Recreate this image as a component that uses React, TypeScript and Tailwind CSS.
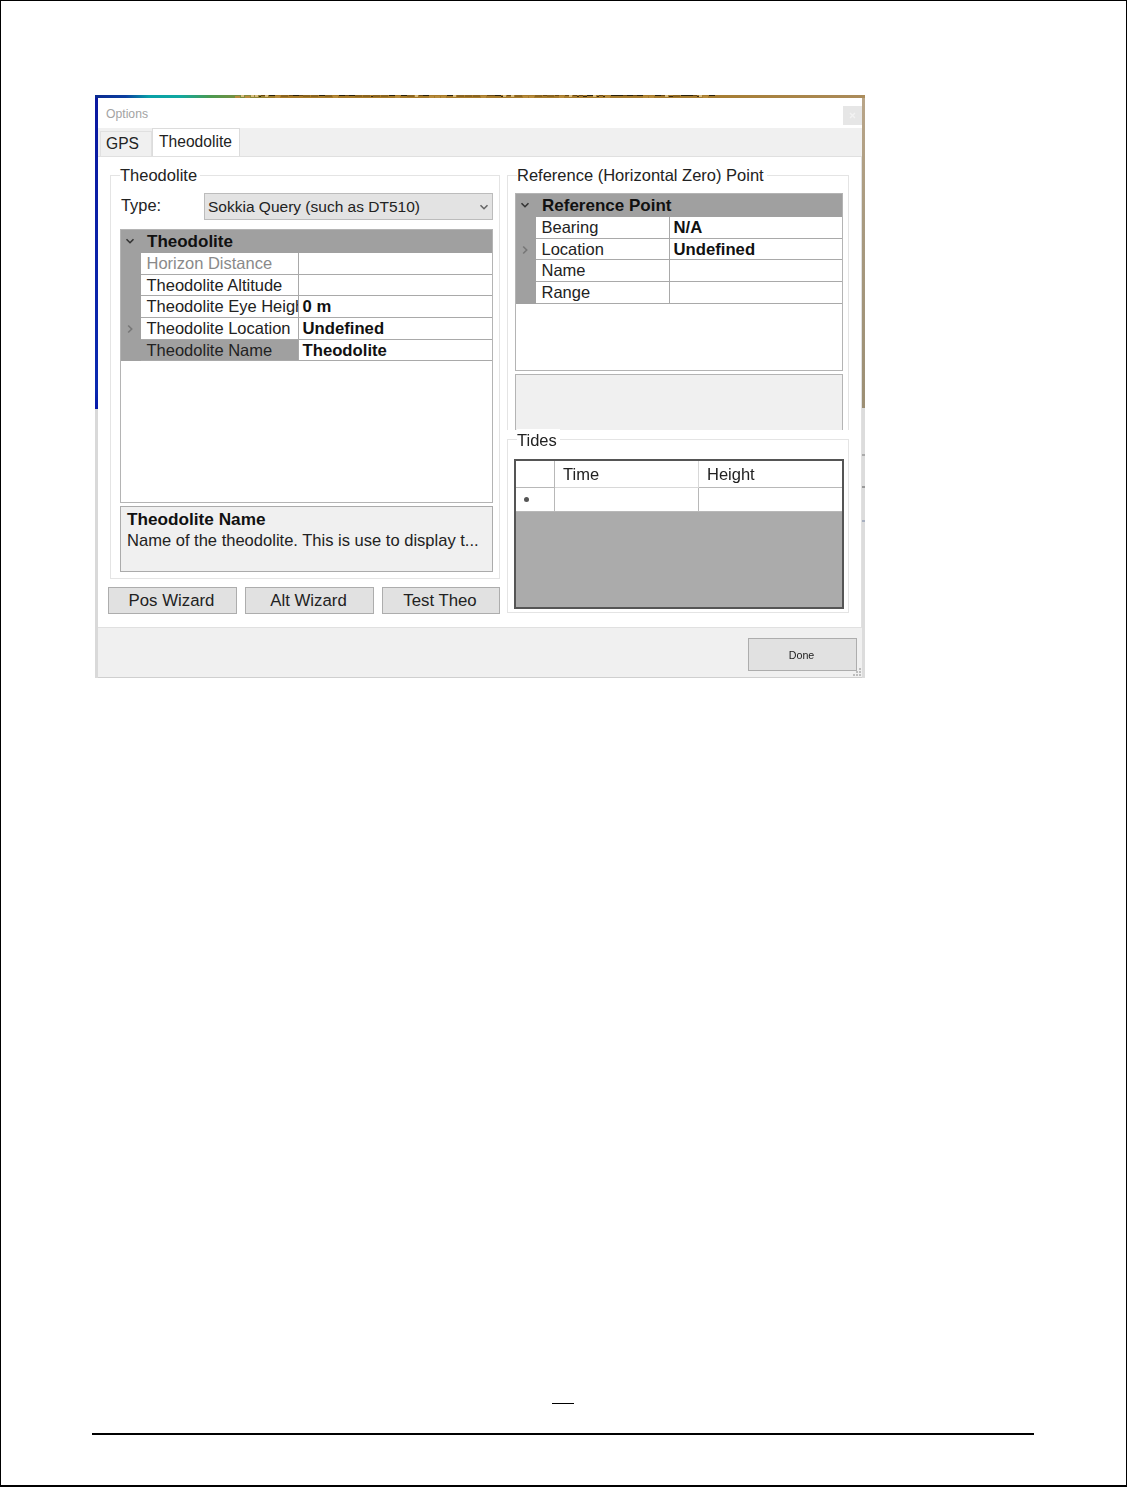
import React from "react";

function Speckle() {
  const cols = ["#3a2a10", "#d8bc80", "#6a4812", "#b88c3c", "#2a2008", "#8a6420"];
  const rects = [];
  let s = 17;
  for (let x = 140; x < 615; ) {
    s = (s * 73 + 41) % 1009;
    const w = 2 + (s % 6);
    rects.push(<rect key={x} x={x} y={s % 3 === 0 ? 1 : 0} width={w} height={1 + (s % 2)} fill={cols[s % 6]} />);
    x += w + (s % 2);
  }
  return (
    <svg width="770" height="3" viewBox="0 0 770 3" className="block">
      <defs>
        <linearGradient id="wall" x1="0" x2="1" y1="0" y2="0">
          <stop offset="0" stopColor="#0a2a90" />
          <stop offset="0.04" stopColor="#0a3fa0" />
          <stop offset="0.07" stopColor="#08a0a8" />
          <stop offset="0.11" stopColor="#10a8a0" />
          <stop offset="0.15" stopColor="#4a9a50" />
          <stop offset="0.2" stopColor="#8a8a3a" />
          <stop offset="0.24" stopColor="#a87a28" />
          <stop offset="0.8" stopColor="#a67c30" />
          <stop offset="1" stopColor="#ab8c5c" />
        </linearGradient>
      </defs>
      <rect width="770" height="3" fill="url(#wall)" />
      {rects}
    </svg>
  );
}

function Chevron({ dir, color }: { dir: "down" | "right"; color: string }) {
  return (
    <svg width="10" height="10" viewBox="0 0 10 10" fill="none" stroke={color} strokeWidth="1.6">
      {dir === "down" ? <path d="M1.5 3.2 L5 6.7 L8.5 3.2" /> : <path d="M3.2 1.5 L6.7 5 L3.2 8.5" />}
    </svg>
  );
}

type Row = { name: string; value?: string; muted?: boolean; arrow?: boolean; selected?: boolean };

function Grid({ title, rows, nameW, className }: { title: string; rows: Row[]; nameW: string; className: string }) {
  return (
    <div className={`flex flex-col border border-[#b4b4b4] bg-white ${className}`}>
      <div className="flex h-[23px] shrink-0 items-center bg-[#a0a0a0] text-[17px] font-bold text-[#111]">
        <div className="flex w-[20px] justify-center pb-[2px] pr-[2px]">
          <Chevron dir="down" color="#333" />
        </div>
        <span className="ml-[6px] pt-[1px] leading-[24px]">{title}</span>
      </div>
      {rows.map((r) => (
        <div key={r.name} className="flex h-[21.7px] shrink-0 bg-[#a0a0a0]">
          <div className="flex w-[20px] shrink-0 items-center justify-center pr-[2px]">
            {r.arrow && <Chevron dir="right" color="#777" />}
          </div>
          <div
            className={`${nameW} shrink-0 overflow-hidden whitespace-nowrap border-b border-r border-[#a9a9a9] pl-[5.5px] text-[16.5px] leading-[21.5px] ${
              r.selected ? "bg-[#a0a0a0] text-[#222]" : "bg-white"
            } ${r.muted ? "text-[#8a8a8a]" : "text-[#222]"}`}
          >
            {r.name}
          </div>
          <div className="flex-1 whitespace-nowrap border-b border-[#a9a9a9] bg-white pl-[3.5px] text-[16.7px] font-bold leading-[21.5px] text-[#111]">
            {r.value}
          </div>
        </div>
      ))}
    </div>
  );
}

function Btn({ label, className }: { label: string; className: string }) {
  return (
    <div className={`flex items-center justify-center border border-[#adadad] bg-[#e1e1e1] pr-[2px] text-[16.8px] text-[#222] ${className}`}>
      {label}
    </div>
  );
}

function Legend({ children, className }: { children: React.ReactNode; className: string }) {
  return <div className={`-mt-[11px] h-[21px] w-fit bg-white pr-[3px] text-[16.5px] leading-[21px] text-[#222] ${className}`}>{children}</div>;
}

export default function App() {
  return (
    <div className="box-border h-[1487px] w-[1127px] overflow-hidden border-b-[2px] border-l border-r border-t border-black bg-white font-['Liberation_Sans',Arial,sans-serif] text-[16.4px]">
      <div className="ml-[94px] mt-[94px] flex h-[583px] w-[770px] flex-col blur-[0.35px]">
        <div className="h-[3px] shrink-0 overflow-hidden">
          <Speckle />
        </div>
        <div className="flex min-h-0 flex-1">
          <div className="w-[3px] shrink-0 bg-[linear-gradient(180deg,#0a18a0_0%,#0a2ab0_50%,#0618a8_53.6%,#d9d9d9_53.7%,#d9d9d9_100%)]" />
          <div className="relative flex min-w-0 flex-1 flex-col">
            <div className="flex h-[30px] shrink-0 items-start justify-between bg-white">
              <span className="ml-[8px] mt-[8.5px] text-[12.2px] leading-[15px] text-[#a3a3a3]">Options</span>
              <div className="mt-[8px] flex h-[19px] w-[19px] items-center justify-center bg-[#e6e6e6]">
                <svg width="7" height="7" viewBox="0 0 7 7" stroke="#f2f2f2" strokeWidth="1.4">
                  <path d="M1 1 L6 6 M6 1 L1 6" />
                </svg>
              </div>
            </div>
            <div className="flex h-[28px] shrink-0 items-end bg-[#f0f0f0] pl-[2px] text-[15.6px] text-[#222]">
              <div className="flex h-[25px] w-[52px] items-center border border-b-0 border-[#e0e0e0] bg-[#f0f0f0] pl-[5px] text-[#222]">
                GPS
              </div>
              <div className="flex h-[28px] w-[88px] items-center justify-center border border-b-0 border-[#dcdcdc] bg-white pb-[2px] pr-[1px]">
                Theodolite
              </div>
            </div>
            <div className="flex h-[472px] shrink-0 gap-[7px] border-b border-r border-t border-[#e0e0e0] bg-white pl-[10px] pt-[18px]">
              <div className="flex w-[392px] flex-col">
                <div className="ml-[2px] flex h-[404px] w-[390px] flex-col border border-[#e4e4e4] pl-[9px] pr-[6px]">
                  <Legend className="ml-0">Theodolite</Legend>
                  <div className="mt-[7px] flex h-[27px] shrink-0 items-center">
                    <span className="ml-[1px] w-[83px] pb-[2px] text-[#222]">Type:</span>
                    <div className="flex h-[27px] flex-1 items-center justify-between border border-[#bcbcbc] bg-[#e3e3e3] pl-[3px] pr-[3px] text-[15.5px] text-[#222]">
                      <span>Sokkia Query (such as DT510)</span>
                      <Chevron dir="down" color="#666" />
                    </div>
                  </div>
                  <Grid
                    className="mt-[9px] h-[274px] shrink-0"
                    nameW="w-[158px]"
                    title="Theodolite"
                    rows={[
                      { name: "Horizon Distance", muted: true },
                      { name: "Theodolite Altitude" },
                      { name: "Theodolite Eye Height", value: "0 m" },
                      { name: "Theodolite Location", value: "Undefined", arrow: true },
                      { name: "Theodolite Name", value: "Theodolite", selected: true },
                    ]}
                  />
                  <div className="mt-[3px] h-[66px] shrink-0 border border-[#ababab] bg-[#f0f0f0] pl-[6px] pt-[2px] text-[16.55px] leading-[21px] text-[#222]">
                    <div className="text-[17.2px] font-bold text-[#111]">Theodolite Name</div>
                    <div className="whitespace-nowrap">Name of the theodolite. This is use to display t...</div>
                  </div>
                </div>
                <div className="mt-[8px] flex gap-[8px]">
                  <Btn label="Pos Wizard" className="h-[27px] w-[129px]" />
                  <Btn label="Alt Wizard" className="h-[27px] w-[129px]" />
                  <Btn label="Test Theo" className="h-[27px] w-[118px]" />
                </div>
              </div>
              <div className="flex w-[342px] flex-col">
                <div className="flex h-[255px] shrink-0 flex-col border-l border-r border-t border-[#e4e4e4] pl-[7px] pr-[5px]">
                  <Legend className="ml-[2px]">Reference (Horizontal Zero) Point</Legend>
                  <Grid
                    className="mt-[7px] h-[178px] shrink-0"
                    nameW="w-[134px]"
                    title="Reference Point"
                    rows={[
                      { name: "Bearing", value: "N/A" },
                      { name: "Location", value: "Undefined", arrow: true },
                      { name: "Name" },
                      { name: "Range" },
                    ]}
                  />
                  <div className="mt-[3px] h-[56px] shrink-0 border-l border-r border-t border-[#b4b4b4] bg-[#f0f0f0]" />
                </div>
                <div className="mt-[9px] flex h-[174px] shrink-0 flex-col border border-[#e4e4e4] pl-[6px] pr-[4px]">
                  <Legend className="ml-[3px] pt-[1px]">Tides</Legend>
                  <div className="mt-[9px] flex h-[150px] shrink-0 flex-col border-2 border-[#555] bg-[#ababab] text-[16.5px] text-[#222]">
                    <div className="flex h-[27px] shrink-0 bg-white">
                      <div className="w-[39px] border-b border-r border-[#b8b8b8]" />
                      <div className="w-[144px] border-b border-r border-[#d8d8d8] pl-[8px] leading-[27px]">Time</div>
                      <div className="flex-1 border-b border-[#b8b8b8] pl-[8px] leading-[27px]">Height</div>
                    </div>
                    <div className="flex h-[24px] shrink-0 bg-white">
                      <div className="flex w-[39px] items-center border-b border-r border-[#b8b8b8] pl-[8px]">
                        <span className="h-[5px] w-[5px] rounded-full bg-[#555]" />
                      </div>
                      <div className="w-[144px] border-b border-r border-[#b8b8b8]" />
                      <div className="flex-1 border-b border-[#b8b8b8]" />
                    </div>
                  </div>
                </div>
              </div>
            </div>
            <div className="flex flex-1 items-start justify-end border-b border-[#cfcfcf] bg-[#f0f0f0] pr-[5px] pt-[10px]">
              <div className="flex h-[33px] w-[109px] items-center justify-center border border-[#adadad] bg-[#e1e1e1] pr-[2px] pt-[1px] text-[10.7px] text-[#222]">
                Done
              </div>
            </div>
            <svg width="9" height="9" viewBox="0 0 9 9" fill="#bdbdbd" className="absolute bottom-[1px] right-0">
              <rect x="6" y="0" width="2" height="2" />
              <rect x="3" y="3" width="2" height="2" />
              <rect x="6" y="3" width="2" height="2" />
              <rect x="0" y="6" width="2" height="2" />
              <rect x="3" y="6" width="2" height="2" />
              <rect x="6" y="6" width="2" height="2" />
            </svg>
          </div>
          <div className="flex w-[3px] shrink-0 flex-col bg-[#dcdcdc]">
            <div className="h-[310px] shrink-0 bg-[linear-gradient(180deg,#b9a588_0%,#a89a80_40%,#9c8f74_100%)]" />
            <div className="mt-[46px] h-[2px] shrink-0 bg-[#aaa]" />
            <div className="mt-[30px] h-[2px] shrink-0 bg-[#999]" />
            <div className="mt-[32px] h-[2px] shrink-0 bg-[#a8b0c0]" />
          </div>
        </div>
      </div>
      <div className="ml-[551px] mt-[725px] h-px w-[22px] bg-black" />
      <div className="ml-[91px] mt-[29px] h-[2px] w-[942px] bg-black" />
    </div>
  );
}
